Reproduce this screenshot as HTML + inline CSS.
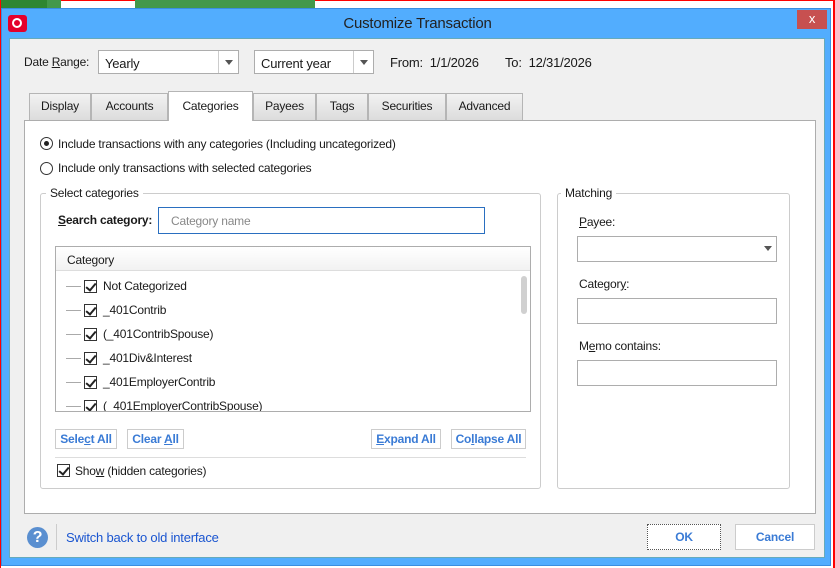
<!DOCTYPE html>
<html><head><style>
*{box-sizing:border-box;margin:0;padding:0}
body{width:835px;height:568px;overflow:hidden;background:#fff;font-family:"Liberation Sans",sans-serif;font-size:12px;color:#1a1a1a;position:relative;letter-spacing:-0.2px}
.a{position:absolute;white-space:nowrap}
.frame{left:1px;top:8px;width:830px;height:558px;background:#52adfe;border:1px solid #3a8ee0}
.content{left:9px;top:38px;width:816px;height:520px;background:#f0f0f0;border:1px solid #6ab}
.box{background:#fff;border:1px solid #adadad}
.tab{top:93px;height:27px;background:linear-gradient(#f2f2f2,#dcdcdc);border:1px solid #b5b5b5;border-bottom:none;text-align:center;line-height:25px}
.cb{width:13px;height:13px;border:1px solid #333;background:#fff;display:inline-block;position:relative}
.cb:after{content:"";position:absolute;left:3px;top:0px;width:4px;height:8px;border:solid #222;border-width:0 2px 2px 0;transform:rotate(40deg)}
.btn{height:20px;border:1px solid #ccc;background:#fff;color:#3a7bd5;font-weight:bold;text-align:center;line-height:18px}
.row{left:66px;height:24px;line-height:20px;width:400px}
.row .ln{position:absolute;left:0;top:10px;width:15px;border-top:1px solid #aaa}
.row .cb{position:absolute;left:18px;top:4px}
.row span.t{position:absolute;left:37px;top:0;white-space:nowrap}
</style></head><body>
<div class="a" style="left:0;top:0;width:835px;height:8px;background:#fff;border-top:1px solid red"></div>
<div class="a" style="left:0;top:0;width:47px;height:8px;background:#2e8632"></div>
<div class="a" style="left:47px;top:0;width:14px;height:8px;background:#43984b"></div>
<div class="a" style="left:135px;top:0;width:180px;height:8px;background:#43984b"></div>
<div class="a" style="left:0;top:0;width:1px;height:568px;background:red"></div>
<div class="a" style="left:833px;top:0;width:2px;height:568px;background:red"></div>
<div class="a frame"></div>
<div class="a" style="left:8px;top:15px;width:19px;height:17px;background:#e4002b;border-radius:3px"></div>
<div class="a" style="left:12px;top:18px;width:10px;height:10px;border:2px solid #fff;border-radius:50%"></div>
<div class="a" style="left:0;top:15px;width:835px;text-align:center;font-size:15px;color:#222">Customize Transaction</div>
<div class="a" style="left:797px;top:10px;width:30px;height:19px;background:#c75050;color:#fff;text-align:center;line-height:18px;font-size:13px">x</div>
<div class="a content"></div>

<div class="a" style="left:24px;top:55px">Date <u>R</u>ange:</div>
<div class="a box" style="left:98px;top:50px;width:141px;height:24px;padding:5px 6px;font-size:13px">Yearly</div>
<div class="a" style="left:218px;top:51px;width:1px;height:22px;background:#ccc"></div>
<div class="a" style="left:225px;top:60px;border:4px solid transparent;border-top:5px solid #555"></div>
<div class="a box" style="left:254px;top:50px;width:120px;height:24px;padding:5px 6px;font-size:13px">Current year</div>
<div class="a" style="left:353px;top:51px;width:1px;height:22px;background:#ccc"></div>
<div class="a" style="left:360px;top:60px;border:4px solid transparent;border-top:5px solid #555"></div>
<div class="a" style="left:390px;top:55px;font-size:13px">From:&nbsp; 1/1/2026</div>
<div class="a" style="left:505px;top:55px;font-size:13px">To:&nbsp; 12/31/2026</div>

<div class="a box" style="left:24px;top:120px;width:792px;height:394px"></div>
<div class="a tab" style="left:29px;width:62px">Display</div>
<div class="a tab" style="left:91px;width:77px">Accounts</div>
<div class="a tab" style="left:168px;width:85px;top:91px;height:30px;background:#fff;line-height:29px;z-index:2">Categories</div>
<div class="a tab" style="left:253px;width:63px">Payees</div>
<div class="a tab" style="left:316px;width:52px">Tags</div>
<div class="a tab" style="left:368px;width:78px">Securities</div>
<div class="a tab" style="left:446px;width:77px">Advanced</div>

<div class="a" style="left:40px;top:137px;width:13px;height:13px;border:1px solid #333;border-radius:50%;background:#fff"></div>
<div class="a" style="left:44px;top:141px;width:5px;height:5px;border-radius:50%;background:#222"></div>
<div class="a" style="left:58px;top:137px">Include transactions with any categories (Including uncategorized)</div>
<div class="a" style="left:40px;top:162px;width:13px;height:13px;border:1px solid #333;border-radius:50%;background:#fff"></div>
<div class="a" style="left:58px;top:161px">Include only transactions with selected categories</div>

<div class="a" style="left:40px;top:193px;width:501px;height:296px;border:1px solid #ccc;border-radius:3px"></div>
<div class="a" style="left:46px;top:186px;background:#fff;padding:0 4px">Select categories</div>
<div class="a" style="left:58px;top:213px;font-weight:bold"><u>S</u>earch category:</div>
<div class="a" style="left:158px;top:207px;width:327px;height:27px;border:1px solid #2a6fc0;background:#fff;color:#888;padding:6px 12px">Category name</div>

<div class="a" style="left:55px;top:246px;width:476px;height:166px;border:1px solid #adadad;background:#fff"></div>
<div class="a" style="left:56px;top:247px;width:474px;height:24px;background:linear-gradient(#fff,#f2f2f2);border-bottom:1px solid #ddd;padding:6px 11px">Category</div>
<div class="a" style="left:521px;top:276px;width:6px;height:38px;background:#d0d0d0;border-radius:3px"></div>
<div class="a" style="left:55px;top:272px;width:465px;height:139px;overflow:hidden">
<div class="a row" style="left:11px;top:4px"><i class="ln"></i><i class="cb"></i><span class="t">Not Categorized</span></div>
<div class="a row" style="left:11px;top:28px"><i class="ln"></i><i class="cb"></i><span class="t">_401Contrib</span></div>
<div class="a row" style="left:11px;top:52px"><i class="ln"></i><i class="cb"></i><span class="t">(_401ContribSpouse)</span></div>
<div class="a row" style="left:11px;top:76px"><i class="ln"></i><i class="cb"></i><span class="t">_401Div&amp;Interest</span></div>
<div class="a row" style="left:11px;top:100px"><i class="ln"></i><i class="cb"></i><span class="t">_401EmployerContrib</span></div>
<div class="a row" style="left:11px;top:124px"><i class="ln"></i><i class="cb"></i><span class="t">(_401EmployerContribSpouse)</span></div>
</div>

<div class="a btn" style="left:55px;top:429px;width:62px">Sele<u>c</u>t All</div>
<div class="a btn" style="left:127px;top:429px;width:57px">Clear <u>A</u>ll</div>
<div class="a btn" style="left:371px;top:429px;width:70px"><u>E</u>xpand All</div>
<div class="a btn" style="left:451px;top:429px;width:75px">Co<u>l</u>lapse All</div>
<div class="a" style="left:55px;top:457px;width:471px;border-top:1px solid #ddd"></div>
<div class="a cb" style="left:57px;top:464px"></div>
<div class="a" style="left:75px;top:464px">Sho<u>w</u> (hidden categories)</div>

<div class="a" style="left:557px;top:193px;width:233px;height:296px;border:1px solid #ccc;border-radius:3px"></div>
<div class="a" style="left:561px;top:186px;background:#fff;padding:0 4px">Matching</div>
<div class="a" style="left:579px;top:215px"><u>P</u>ayee:</div>
<div class="a" style="left:577px;top:236px;width:200px;height:26px;border:1px solid #adadad;background:#fff"></div>
<div class="a" style="left:764px;top:246px;border:4px solid transparent;border-top:5px solid #555"></div>
<div class="a" style="left:579px;top:277px">Categor<u>y</u>:</div>
<div class="a" style="left:577px;top:298px;width:200px;height:26px;border:1px solid #adadad;background:#fff"></div>
<div class="a" style="left:579px;top:339px">M<u>e</u>mo contains:</div>
<div class="a" style="left:577px;top:360px;width:200px;height:26px;border:1px solid #adadad;background:#fff"></div>

<div class="a" style="left:27px;top:527px;width:21px;height:21px;border-radius:50%;background:#5a8fd0;color:#fff;font-weight:bold;font-size:16px;text-align:center;line-height:21px">?</div>
<div class="a" style="left:56px;top:524px;width:1px;height:26px;background:#ccc"></div>
<div class="a" style="left:66px;top:530px;color:#1a55d0;font-size:13px">Switch back to old interface</div>
<div class="a" style="left:647px;top:524px;width:74px;height:26px;background:#fff;border:1px dotted #555;color:#3a7bd5;font-weight:bold;text-align:center;line-height:24px">OK</div>
<div class="a" style="left:735px;top:524px;width:80px;height:26px;background:#fff;border:1px solid #ccc;color:#3a7bd5;font-weight:bold;text-align:center;line-height:24px">Cancel</div>
</body></html>
